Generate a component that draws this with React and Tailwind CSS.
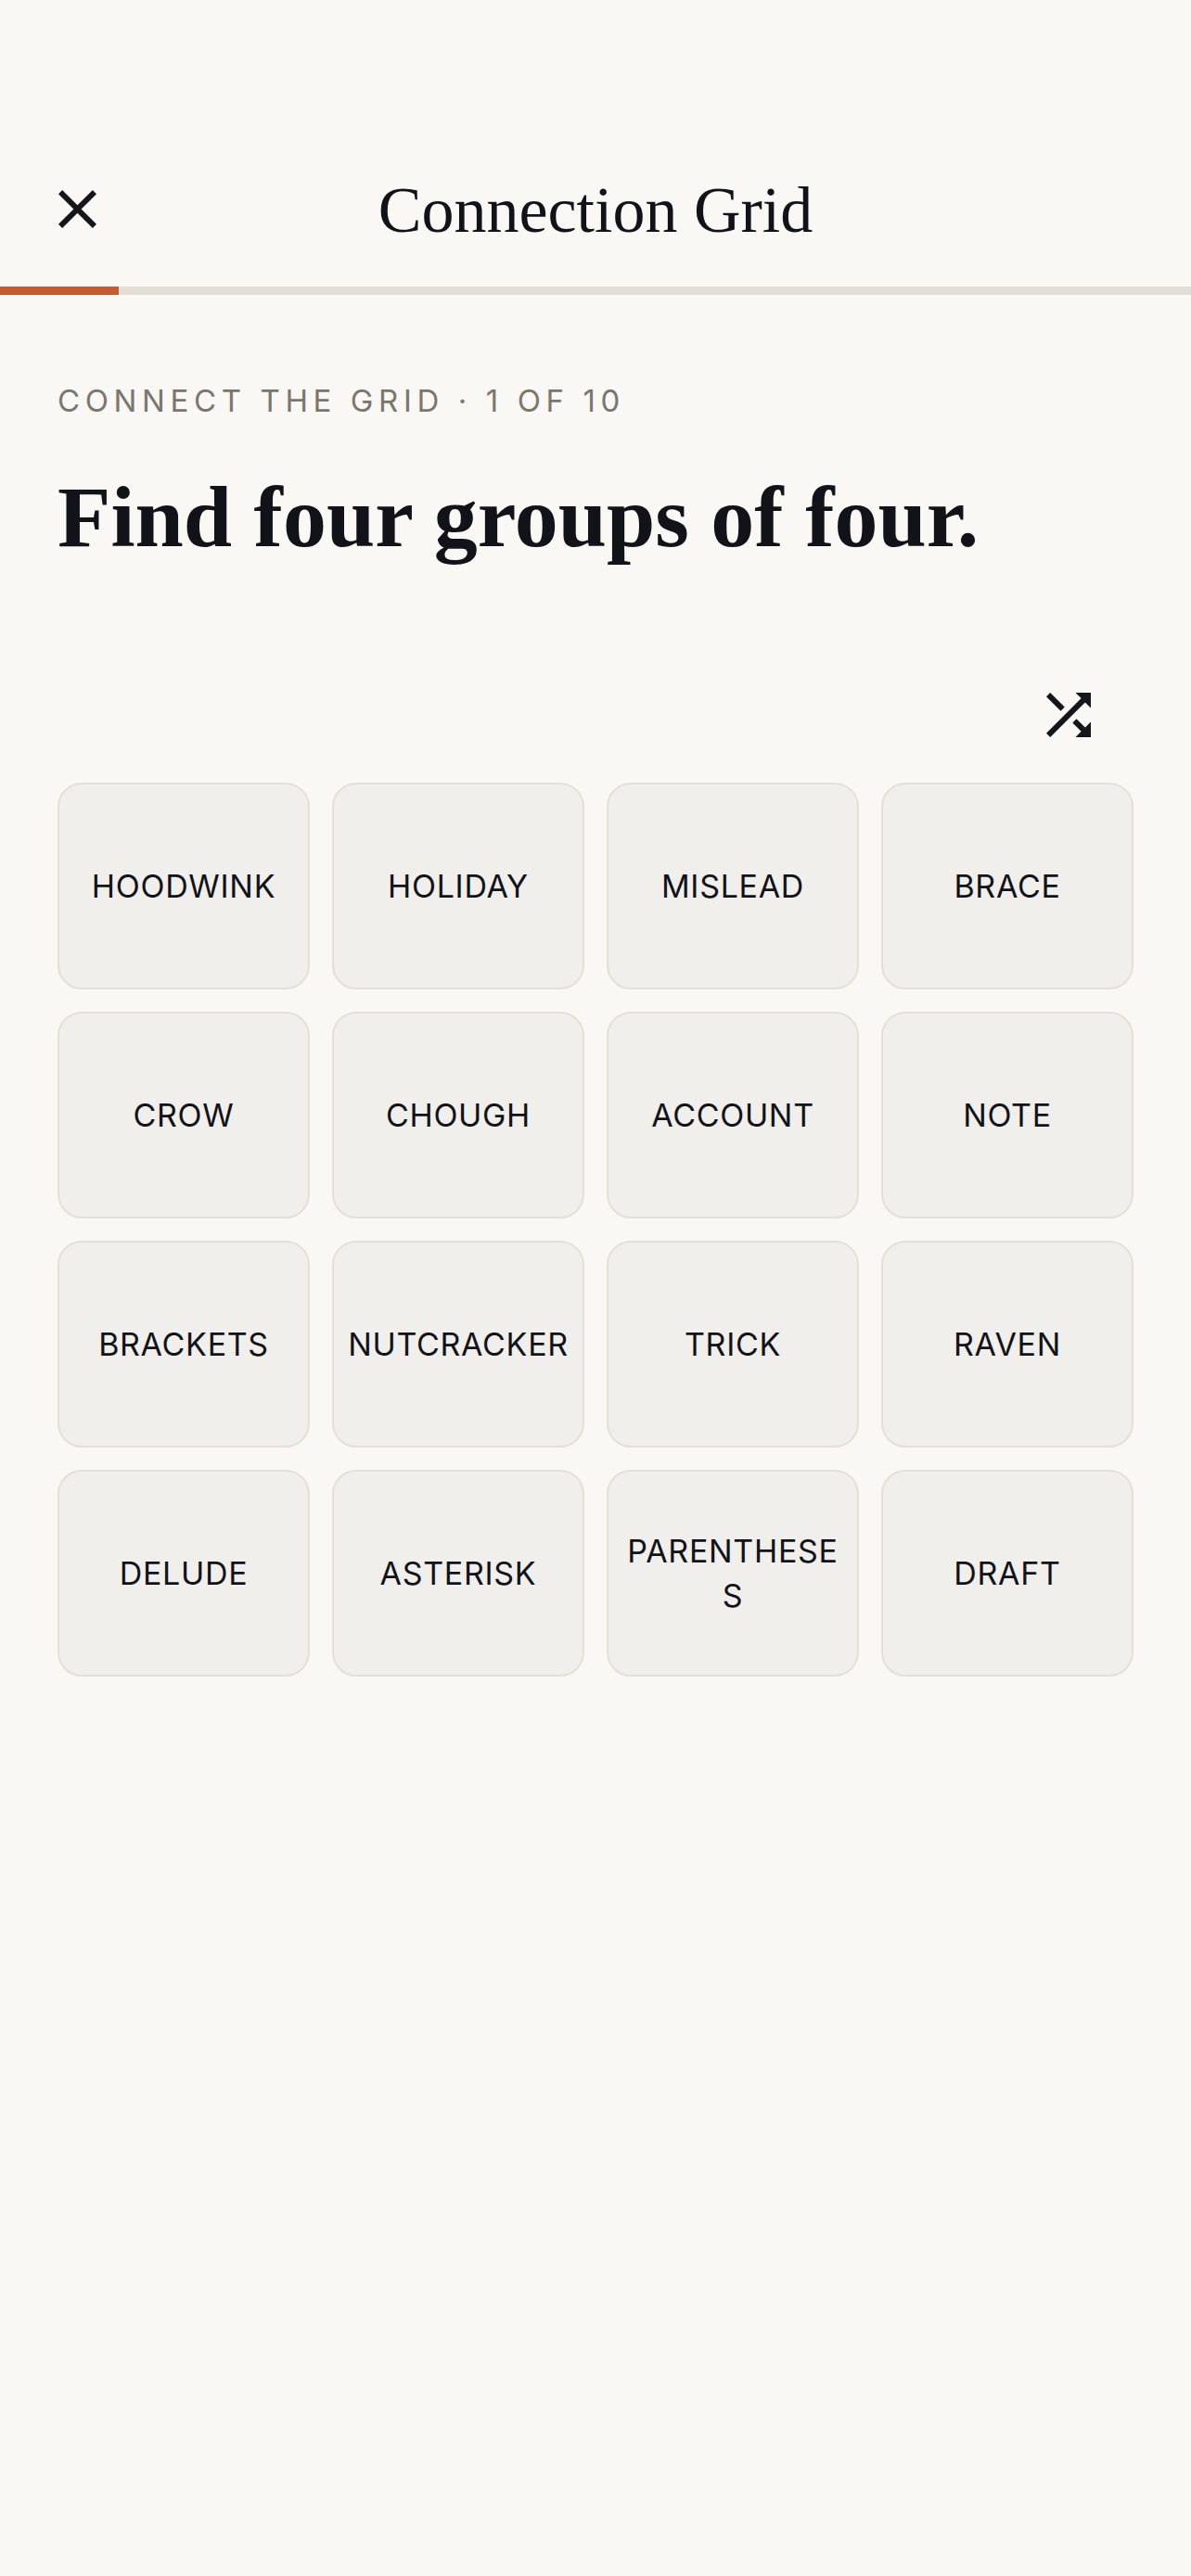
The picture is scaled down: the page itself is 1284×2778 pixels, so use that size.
import React from "react";

const words = [
  "HOODWINK",
  "HOLIDAY",
  "MISLEAD",
  "BRACE",
  "CROW",
  "CHOUGH",
  "ACCOUNT",
  "NOTE",
  "BRACKETS",
  "NUTCRACKER",
  "TRICK",
  "RAVEN",
  "DELUDE",
  "ASTERISK",
  "PARENTHESES",
  "DRAFT",
];

function CloseIcon() {
  return (
    <svg width="41" height="41" viewBox="5 5 14 14" fill="#15161a">
      <path d="M19 6.41L17.59 5 12 10.59 6.41 5 5 6.41 10.59 12 5 17.59 6.41 19 12 13.41 17.59 19 19 17.59 13.41 12z" />
    </svg>
  );
}

function ShuffleIcon() {
  return (
    <svg width="48" height="48" viewBox="4 4 16 16" fill="#15161a">
      <path d="M10.59 9.17L5.41 4 4 5.41l5.17 5.17 1.42-1.41zM14.5 4l2.04 2.04L4 18.59 5.41 20 17.96 7.46 20 9.5V4h-5.5zm.33 9.41l-1.41 1.41 3.13 3.13L14.5 20H20v-5.5l-2.04 2.04-3.13-3.13z" />
    </svg>
  );
}

function Tile({ word }) {
  return (
    <button className="h-[223px] rounded-[26px] border-2 border-[#e4e0d8] bg-[#f0efeb] px-[14px] flex items-center justify-center text-center break-all font-['Inter',sans-serif] text-[34px] leading-[48px] tracking-[0.02em] text-[#121318]">
      {word}
    </button>
  );
}

export default function App() {
  return (
    <div className="min-h-screen bg-[#f9f8f5] pt-[150px]">
      {/* header */}
      <div className="h-[150px] grid grid-cols-[1fr_auto_1fr] items-center px-[63px]">
        <button className="flex items-center justify-start">
          <CloseIcon />
        </button>
        <h1 className="font-['Liberation_Serif',serif] text-[70px] leading-none text-[#121318] pt-[4px]">
          Connection Grid
        </h1>
        <div />
      </div>

      {/* progress */}
      <div className="mt-[9px] h-[9px] bg-[#e3dfd6] flex">
        <div className="w-[128px] bg-[#c85a32]" />
      </div>

      <div className="px-[62px]">
        <p className="mt-[94px] font-['Inter',sans-serif] text-[33px] leading-[40px] tracking-[0.17em] text-[#7b766e]">
          CONNECT THE GRID · 1 OF 10
        </p>
        <h2 className="mt-[53px] font-['Liberation_Serif',serif] font-bold text-[94px] leading-[104px] text-[#121318]">
          Find four groups of four.
        </h2>

        <div className="mt-[138px] flex justify-end pr-[46px]">
          <button>
            <ShuffleIcon />
          </button>
        </div>

        <div className="mt-[49px] grid grid-cols-4 gap-[24px]">
          {words.map((w) => (
            <Tile key={w} word={w} />
          ))}
        </div>
      </div>
    </div>
  );
}
